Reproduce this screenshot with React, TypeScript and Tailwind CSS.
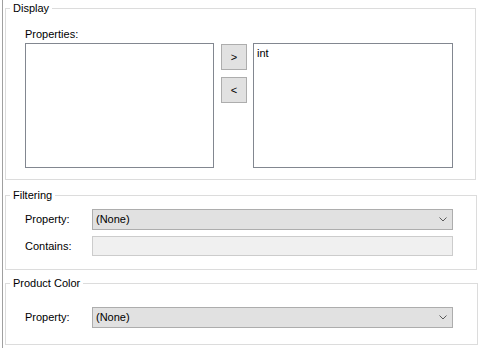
import React from 'react';

const ListBox: React.FC<{ width: string; items?: string[] }> = ({ width, items = [] }) => (
  <div className={`${width} h-[125px] border border-[#828790] bg-white px-[3px] pt-[2px]`}>
    {items.map((item) => (
      <div key={item} className="leading-[14px]">
        {item}
      </div>
    ))}
  </div>
);

const MoveButton: React.FC<{ label: string }> = ({ label }) => (
  <button className="w-[26px] h-[26px] border border-[#adadad] bg-[#e1e1e1] flex items-center justify-center leading-none text-[11px]">
    {label}
  </button>
);

const ComboBox: React.FC<{ value: string }> = ({ value }) => (
  <div className="w-[361px] h-[21px] border border-[#adadad] bg-[#e1e1e1] flex items-center justify-between pl-[3px] pr-[5px]">
    <span>{value}</span>
    <svg width="8" height="5" viewBox="0 0 8 5">
      <path d="M0.5 0.5 L4 4 L7.5 0.5" fill="none" stroke="#5a5a5a" strokeWidth="1" />
    </svg>
  </div>
);

const FormRow: React.FC<{ label: string; children: React.ReactNode; className?: string }> = ({
  label,
  children,
  className = '',
}) => (
  <div className={`flex items-center pl-[19px] ${className}`}>
    <span className="w-[67px]">{label}</span>
    {children}
  </div>
);

const App: React.FC = () => {
  return (
    <div className="w-[486px] h-[348px] bg-white flex text-[11px] text-black font-['Liberation_Sans',Arial,sans-serif] overflow-hidden">
      <div className="ml-[2px] w-px h-full bg-[#a0a0a0]" />
      <div className="ml-[2px] flex flex-col">
        {/* Display */}
        <fieldset className="mt-[1px] w-[471px] h-[179px] border border-[#dcdcdc]">
          <legend className="ml-[4px] px-[3px] leading-[14px]">Display</legend>
          <div className="pl-[19px] mt-[12px] leading-[14px]">Properties:</div>
          <div className="flex pl-[19px] mt-[2px]">
            <ListBox width="w-[189px]" />
            <div className="ml-[7px] mt-[1px] flex flex-col gap-[7px]">
              <MoveButton label=">" />
              <MoveButton label="<" />
            </div>
            <div className="ml-[6px]">
              <ListBox width="w-[200px]" items={['int']} />
            </div>
          </div>
        </fieldset>

        {/* Filtering */}
        <fieldset className="mt-[8px] w-[472px] h-[82px] border border-[#dcdcdc]">
          <legend className="ml-[4px] px-[3px] leading-[14px]">Filtering</legend>
          <FormRow label="Property:" className="mt-[7px]">
            <ComboBox value="(None)" />
          </FormRow>
          <FormRow label="Contains:" className="mt-[6px]">
            <div className="w-[361px] h-[20px] border border-[#cccccc] bg-[#f0f0f0]" />
          </FormRow>
        </fieldset>

        {/* Product Color */}
        <fieldset className="mt-[6px] w-[473px] h-[69px] border border-[#dcdcdc]">
          <legend className="ml-[4px] px-[3px] leading-[14px]">Product Color</legend>
          <FormRow label="Property:" className="mt-[17px]">
            <ComboBox value="(None)" />
          </FormRow>
        </fieldset>
      </div>
    </div>
  );
};

export default App;
